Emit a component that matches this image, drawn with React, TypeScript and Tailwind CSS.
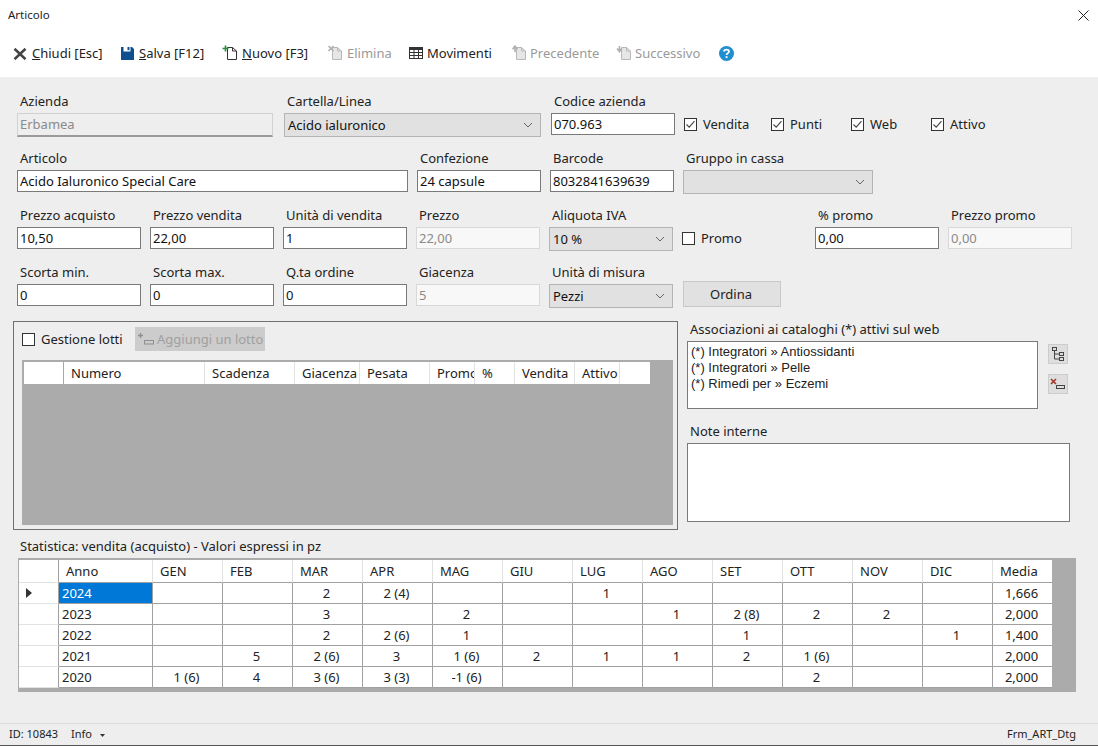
import React from "react";

function Check({ checked = false }: { checked?: boolean }) {
  return (
    <span className="w-[13px] h-[13px] border border-[#333333] bg-white flex items-center justify-center shrink-0">
      {checked && (
        <svg width="11" height="11" viewBox="0 0 11 11" fill="none">
          <path d="M1.5 5.5 L4.2 8.2 L9.5 2.2" stroke="#444444" strokeWidth="1.1" />
        </svg>
      )}
    </span>
  );
}

function CheckLabel({ text, checked, className }: { text: string; checked?: boolean; className: string }) {
  return (
    <div className={className}>
      <Check checked={checked} />
      <span className="ml-[6px] mt-[2px] text-[#222222]">{text}</span>
    </div>
  );
}

function Label({ text }: { text: string }) {
  return <div className="h-5 leading-5 pl-[3px] mb-[2px] text-[#222222] whitespace-nowrap">{text}</div>;
}

function TextField({ label, value, width, disabled = false }: { label: string; value: string; width: string; disabled?: boolean }) {
  return (
    <div className={width}>
      <Label text={label} />
      <div
        className={
          disabled
            ? "h-[22px] leading-5 pl-[2px] border border-[#d8d8d8] bg-[#f8f8f8] text-[#8a8a8a] whitespace-nowrap"
            : "h-[22px] leading-5 pl-[2px] border border-[#7a7a7a] bg-white text-[#111111] whitespace-nowrap"
        }
      >
        {value}
      </div>
    </div>
  );
}

function Combo({ label, value, width }: { label: string; value: string; width: string }) {
  return (
    <div className={width}>
      <Label text={label} />
      <div className="h-6 leading-[24px] pl-[3px] pr-[7px] border border-[#b4b4b4] bg-[#e1e1e1] text-[#111111] flex items-center justify-between">
        <span>{value}</span>
        <svg width="10" height="6" viewBox="0 0 10 6" fill="none">
          <path d="M1 1 L5 5 L9 1" stroke="#666666" strokeWidth="1" />
        </svg>
      </div>
    </div>
  );
}

function DocIcon({ kind }: { kind: "new" | "del" | "prev" | "next" }) {
  const line = kind === "new" ? "#333333" : "#b8b8b8";
  return (
    <svg width="16" height="15" viewBox="0 0 16 15" fill="none" className="shrink-0">
      <path d="M5.5 2.5 H10.5 L14.5 6 V14.5 H5.5 Z" stroke={line} fill={kind === "new" ? "#ffffff" : "#e6e6e6"} />
      <path d="M10.5 2.5 V6 H14.5" stroke={line} />
      {kind === "new" && <path d="M3.5 0.5 V6.5 M0.5 3.5 H6.5" stroke="#2e8b3d" strokeWidth="1.7" />}
      {kind === "del" && <path d="M1.5 1 L6.5 6 M6.5 1 L1.5 6" stroke="#b0b0b0" strokeWidth="1.6" />}
      {kind === "prev" && <path d="M4 7 V2 M1.6 4.2 L4 1 L6.4 4.2" stroke="#b0b0b0" strokeWidth="1.6" />}
      {kind === "next" && <path d="M3.5 1 V5.5 M1.1 3.4 L3.5 6.6 L5.9 3.4" stroke="#b0b0b0" strokeWidth="1.6" />}
    </svg>
  );
}

const lotCols = [
  { t: "", w: "w-10 border-[#a8a8a8]" },
  { t: "Numero", w: "w-[141px] border-[#e2e2e2] pl-[7px]" },
  { t: "Scadenza", w: "w-[90px] border-[#e2e2e2] pl-[7px]" },
  { t: "Giacenza", w: "w-[65px] border-[#e2e2e2] pl-[7px]" },
  { t: "Pesata", w: "w-[70px] border-[#e2e2e2] pl-[7px]" },
  { t: "Promo", w: "w-[45px] border-[#e2e2e2] pl-[7px]" },
  { t: "%", w: "w-10 border-[#e2e2e2] pl-[7px]" },
  { t: "Vendita", w: "w-[60px] border-[#e2e2e2] pl-[7px]" },
  { t: "Attivo", w: "w-[45px] border-[#e2e2e2] pl-[7px]" },
];

const months = ["GEN", "FEB", "MAR", "APR", "MAG", "GIU", "LUG", "AGO", "SET", "OTT", "NOV", "DIC"];
const stats: { y: string; v: string[]; m: string }[] = [
  { y: "2024", v: ["", "", "2", "2 (4)", "", "", "1", "", "", "", "", ""], m: "1,666" },
  { y: "2023", v: ["", "", "3", "", "2", "", "", "1", "2 (8)", "2", "2", ""], m: "2,000" },
  { y: "2022", v: ["", "", "2", "2 (6)", "1", "", "", "", "1", "", "", "1"], m: "1,400" },
  { y: "2021", v: ["", "5", "2 (6)", "3", "1 (6)", "2", "1", "1", "2", "1 (6)", "", ""], m: "2,000" },
  { y: "2020", v: ["1 (6)", "4", "3 (6)", "3 (3)", "-1 (6)", "", "", "", "", "2", "", ""], m: "2,000" },
];

export default function App() {
  return (
    <div className="w-[1098px] h-[746px] flex flex-col overflow-hidden bg-[#eeeeee] text-[13px] font-['Noto_Sans',sans-serif]">
      <div className="h-[30px] bg-white flex items-center justify-between pl-2 pr-[9px] text-[11.5px] text-[#222222]">
        <span>Articolo</span>
        <svg width="11" height="11" viewBox="0 0 11 11" fill="none">
          <path d="M0.5 0.5 L10.5 10.5 M10.5 0.5 L0.5 10.5" stroke="#222222" strokeWidth="1" />
        </svg>
      </div>
      <div className="h-[47px] bg-white flex items-center pl-[13px] pt-[1px] text-[#222222] whitespace-nowrap">
        <div className="flex items-center w-[108px]">
          <div className="w-[19px]">
            <svg width="14" height="12" viewBox="0 0 14 12" fill="none" className="block">
              <path d="M1.5 0.8 L12.5 11.2 M12.5 0.8 L1.5 11.2" stroke="#444444" strokeWidth="2.6" />
            </svg>
          </div>
          <span><u>C</u>hiudi [Esc]</span>
        </div>
        <div className="flex items-center w-[101px]">
          <div className="w-[18px]">
            <svg width="13" height="13" viewBox="0 0 13 13" className="block -mt-[2px]">
              <path d="M0 0 H2.5 V4.5 H9.5 V0 H11 L13 2 V13 H0 Z" fill="#0f4f8f" />
              <rect x="6.5" y="0" width="2" height="3.2" fill="#0f4f8f" />
            </svg>
          </div>
          <span><u>S</u>alva [F12]</span>
        </div>
        <div className="flex items-center w-[105px]">
          <div className="w-5 -mt-[3px]"><DocIcon kind="new" /></div>
          <span><u>N</u>uovo [F3]</span>
        </div>
        <div className="flex items-center w-[82px] text-[#9a9a9a]">
          <div className="w-5 -mt-[3px]"><DocIcon kind="del" /></div>
          <span>Elimina</span>
        </div>
        <div className="flex items-center w-[102px]">
          <div className="w-[18px]">
            <svg width="14" height="12" viewBox="0 0 14 12" fill="none" className="block -mt-[2px]">
              <rect x="0.5" y="0.5" width="13" height="11" stroke="#333333" />
              <rect x="0.5" y="0.5" width="13" height="2.5" fill="#333333" />
              <path d="M0.5 5.5 H13.5 M0.5 8.5 H13.5 M5 3 V11.5 M9.5 3 V11.5" stroke="#333333" />
            </svg>
          </div>
          <span>Movimenti</span>
        </div>
        <div className="flex items-center w-[105px] text-[#9a9a9a]">
          <div className="w-[19px] -mt-[3px]"><DocIcon kind="prev" /></div>
          <span>Precedente</span>
        </div>
        <div className="flex items-center w-[103px] text-[#9a9a9a]">
          <div className="w-[19px] -mt-[3px]"><DocIcon kind="next" /></div>
          <span>Successivo</span>
        </div>
        <svg width="15" height="15" viewBox="0 0 15 15" className="-mt-[2px]">
          <circle cx="7.5" cy="7.5" r="7.5" fill="#1f8fd0" />
          <path d="M5 5.6 C5 2.9 10 2.9 10 5.6 C10 7.4 7.5 7.2 7.5 9" stroke="#ffffff" strokeWidth="1.8" fill="none" />
          <rect x="6.6" y="10.2" width="1.9" height="1.9" fill="#ffffff" />
        </svg>
      </div>

      <div className="flex-1 pt-[14px]">
        <div className="flex h-[57px] pl-[17px]">
          <div className="w-64">
            <Label text="Azienda" />
            <div className="h-6 leading-[20px] pl-[2px] border border-[#d2d2d2] border-b-2 border-b-[#9a9a9a] bg-[#eeeeee] text-[#8a8a8a]">Erbamea</div>
          </div>
          <div className="w-[11px]" />
          <Combo label="Cartella/Linea" value="Acido ialuronico" width="w-[257px]" />
          <div className="w-[10px]" />
          <TextField label="Codice azienda" value="070.963" width="w-[124px]" />
          <div className="flex items-center h-[22px] mt-[22px]">
            <CheckLabel text="Vendita" checked className="flex items-center ml-[9px] w-[87px]" />
            <CheckLabel text="Punti" checked className="flex items-center w-20" />
            <CheckLabel text="Web" checked className="flex items-center w-20" />
            <CheckLabel text="Attivo" checked className="flex items-center w-20" />
          </div>
        </div>
        <div className="flex h-[57px] pl-[17px] gap-[9px]">
          <TextField label="Articolo" value="Acido Ialuronico Special Care" width="w-[391px]" />
          <TextField label="Confezione" value="24 capsule" width="w-[124px]" />
          <TextField label="Barcode" value="8032841639639" width="w-[124px]" />
          <Combo label="Gruppo in cassa" value="" width="w-[190px]" />
        </div>
        <div className="flex h-[57px] pl-[17px] gap-[9px]">
          <TextField label="Prezzo acquisto" value="10,50" width="w-[124px]" />
          <TextField label="Prezzo vendita" value="22,00" width="w-[124px]" />
          <TextField label="Unità di vendita" value="1" width="w-[124px]" />
          <TextField label="Prezzo" value="22,00" width="w-[124px]" disabled />
          <Combo label="Aliquota IVA" value="10 %" width="w-[124px]" />
          <CheckLabel text="Promo" className="flex items-center h-[22px] mt-[22px] w-[124px]" />
          <TextField label="% promo" value="0,00" width="w-[124px]" />
          <TextField label="Prezzo promo" value="0,00" width="w-[124px]" disabled />
        </div>
        <div className="flex h-[57px] pl-[17px] gap-[9px]">
          <TextField label="Scorta min." value="0" width="w-[124px]" />
          <TextField label="Scorta max." value="0" width="w-[124px]" />
          <TextField label="Q.ta ordine" value="0" width="w-[124px]" />
          <TextField label="Giacenza" value="5" width="w-[124px]" disabled />
          <Combo label="Unità di misura" value="Pezzi" width="w-[124px]" />
          <div className="w-[98px] h-[26px] mt-[19px] ml-[1px] pr-[2px] bg-[#e1e1e1] border border-[#c8c8c8] text-center leading-6 text-[#222222]">Ordina</div>
        </div>

        <div className="flex mt-[2px] pl-[13px]">
          <div className="w-[665px] h-[209px] border border-[#707070] pl-2 pt-[5px]">
            <div className="flex items-center h-6">
              <CheckLabel text="Gestione lotti" className="flex items-center w-[113px]" />
              <div className="w-[130px] h-6 bg-[#cccccc] flex items-center pl-[2px] text-[#a0a0a0]">
                <svg width="18" height="15" viewBox="0 0 18 15" fill="none">
                  <path d="M3.5 1 V6 M1 3.5 H6" stroke="#8f8f8f" strokeWidth="1.4" />
                  <rect x="7.5" y="8.5" width="9" height="3.5" stroke="#8f8f8f" />
                </svg>
                <span className="ml-[2px] mt-[2px]">Aggiungi un lotto</span>
              </div>
            </div>
            <div className="w-[651px] h-[165px] mt-[9px] bg-[#ababab] pt-[2px] pl-[2px]">
              <div className="flex w-[626px] h-[22px] bg-white text-[#222222]">
                {lotCols.map((c, i) => (
                  <div key={i} className={`${c.w} border-r leading-[22px] overflow-hidden whitespace-nowrap`}>{c.t}</div>
                ))}
              </div>
            </div>
          </div>

          <div className="ml-[9px] -mt-[2px] text-[#222222]">
            <Label text="Associazioni ai cataloghi (*) attivi sul web" />
            <div className="flex">
              <div className="w-[351px] h-[68px] border border-[#7a7a7a] bg-white pl-[3px] pt-[2px] text-[#222222] leading-4 font-['Liberation_Sans',sans-serif]">
                <div>(*) Integratori » Antiossidanti</div>
                <div>(*) Integratori » Pelle</div>
                <div>(*) Rimedi per » Eczemi</div>
              </div>
              <div className="ml-[10px] mt-[3px] flex flex-col gap-[10px]">
                <div className="w-5 h-5 bg-[#dedede] border border-[#cccccc] flex items-center justify-center">
                  <svg width="14" height="14" viewBox="0 0 14 14" fill="none">
                    <rect x="1.5" y="0.5" width="4" height="3" stroke="#444444" />
                    <rect x="8.5" y="5.5" width="4" height="3" stroke="#444444" />
                    <rect x="8.5" y="10.5" width="4" height="3" stroke="#444444" />
                    <path d="M3.5 3.5 V12 H8.5 M3.5 7 H8.5" stroke="#444444" />
                  </svg>
                </div>
                <div className="w-5 h-5 bg-[#dedede] border border-[#cccccc] flex items-center justify-center">
                  <svg width="16" height="14" viewBox="0 0 16 14" fill="none">
                    <path d="M1 2 L6 7 M6 2 L1 7" stroke="#a03020" strokeWidth="1.5" />
                    <rect x="6.5" y="8.5" width="8" height="3" stroke="#444444" />
                  </svg>
                </div>
              </div>
            </div>
            <div className="mt-3">
              <Label text="Note interne" />
              <div className="w-[383px] h-[79px] border border-[#7a7a7a] bg-white" />
            </div>
          </div>
        </div>

        <div className="h-5 leading-5 mt-[6px] mb-[2px] pl-5 text-[#222222]">Statistica: vendita (acquisto) - Valori espressi in pz</div>
        <div className="ml-[18px] w-[1058px] h-[134px] bg-[#ababab] pt-[2px] pl-px text-[#222222]">
          <div className="grid grid-cols-[40px_94px_repeat(12,70px)_59px] w-[1033px] grid-rows-[23px_repeat(5,21px)] bg-white">
            <div className="border-r border-b border-r-[#a0a0a0] border-b-[#e2e2e2]" />
            <div className="pl-[7px] leading-[22px] border-r border-b border-r-[#e2e2e2] border-b-[#a0a0a0]">Anno</div>
            {months.map((m) => (
              <div key={m} className="pl-[7px] leading-[22px] border-r border-b border-r-[#e2e2e2] border-b-[#a0a0a0]">{m}</div>
            ))}
            <div className="pl-[7px] leading-[22px] border-b border-b-[#a0a0a0]">Media</div>
            {stats.map((r, i) => (
              <React.Fragment key={r.y}>
                <div className="border-r border-b border-r-[#a0a0a0] border-b-[#e2e2e2] flex items-center pl-[7px]">
                  {i === 0 && (
                    <svg width="6" height="10" viewBox="0 0 6 10">
                      <path d="M0 0 L6 5 L0 10 Z" fill="#333333" />
                    </svg>
                  )}
                </div>
                <div
                  className={
                    i === 0
                      ? "pl-[3px] leading-5 bg-[#0078d7] text-white border-r border-b border-[#a0a0a0]"
                      : "pl-[3px] leading-5 border-r border-b border-[#a0a0a0]"
                  }
                >
                  {r.y}
                </div>
                {r.v.map((v, j) => (
                  <div key={j} className="text-center pr-[2px] leading-5 border-r border-b border-[#a0a0a0]">{v}</div>
                ))}
                <div className="text-center pr-[2px] leading-5 border-b border-[#a0a0a0]">{r.m}</div>
              </React.Fragment>
            ))}
          </div>
        </div>
      </div>

      <div className="h-[23px] border-t border-t-[#dcdcdc] border-b border-b-[#555555] flex items-center pl-[9px] pr-[22px] text-[11px] text-[#222222]">
        <span>ID: 10843</span>
        <span className="ml-[13px]">Info</span>
        <svg width="5" height="3" viewBox="0 0 5 3" className="ml-[8px] mt-px">
          <path d="M0 0 H5 L2.5 3 Z" fill="#333333" />
        </svg>
        <span className="ml-auto">Frm_ART_Dtg</span>
      </div>
    </div>
  );
}
